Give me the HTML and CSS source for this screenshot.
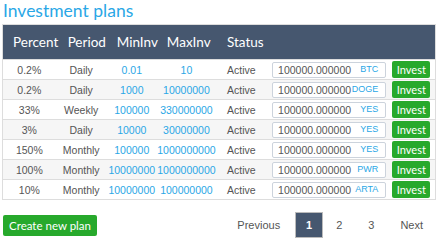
FILE: index.html
```html
<!DOCTYPE html>
<html lang="en">
<head>
    <meta charset="UTF-8">
    <title>Investment plans</title>
    <link rel="stylesheet" href="styles.css">
</head>
<body>
    <div class="page">
        <h2 class="title">Investment plans</h2>

        <table class="plans">
            <colgroup>
                <col class="c-percent">
                <col class="c-period">
                <col class="c-min">
                <col class="c-max">
                <col class="c-status">
                <col class="c-amount">
                <col class="c-action">
            </colgroup>
            <thead>
                <tr>
                    <th>Percent</th>
                    <th>Period</th>
                    <th>MinInv</th>
                    <th>MaxInv</th>
                    <th>Status</th>
                    <th></th>
                    <th></th>
                </tr>
            </thead>
            <tbody>
                <tr>
                    <td><span class="val">0.2%</span></td><td><span class="val">Daily</span></td><td class="num"><span class="val">0.01</span></td><td class="num"><span class="val">10</span></td><td class="status">Active</td>
                    <td class="amount"><div class="amount-box"><span>100000.000000</span><span class="coin">BTC</span></div></td>
                    <td class="action"><button class="invest">Invest</button></td>
                </tr>
                <tr>
                    <td><span class="val">0.2%</span></td><td><span class="val">Daily</span></td><td class="num"><span class="val">1000</span></td><td class="num"><span class="val">10000000</span></td><td class="status">Active</td>
                    <td class="amount"><div class="amount-box"><span>100000.000000</span><span class="coin">DOGE</span></div></td>
                    <td class="action"><button class="invest">Invest</button></td>
                </tr>
                <tr>
                    <td><span class="val">33%</span></td><td><span class="val">Weekly</span></td><td class="num"><span class="val">100000</span></td><td class="num"><span class="val">330000000</span></td><td class="status">Active</td>
                    <td class="amount"><div class="amount-box"><span>100000.000000</span><span class="coin">YES</span></div></td>
                    <td class="action"><button class="invest">Invest</button></td>
                </tr>
                <tr>
                    <td><span class="val">3%</span></td><td><span class="val">Daily</span></td><td class="num"><span class="val">10000</span></td><td class="num"><span class="val">30000000</span></td><td class="status">Active</td>
                    <td class="amount"><div class="amount-box"><span>100000.000000</span><span class="coin">YES</span></div></td>
                    <td class="action"><button class="invest">Invest</button></td>
                </tr>
                <tr>
                    <td><span class="val">150%</span></td><td><span class="val">Monthly</span></td><td class="num"><span class="val">100000</span></td><td class="num"><span class="val">1000000000</span></td><td class="status">Active</td>
                    <td class="amount"><div class="amount-box"><span>100000.000000</span><span class="coin">YES</span></div></td>
                    <td class="action"><button class="invest">Invest</button></td>
                </tr>
                <tr>
                    <td><span class="val">100%</span></td><td><span class="val">Monthly</span></td><td class="num"><span class="val">10000000</span></td><td class="num"><span class="val">1000000000</span></td><td class="status">Active</td>
                    <td class="amount"><div class="amount-box"><span>100000.000000</span><span class="coin">PWR</span></div></td>
                    <td class="action"><button class="invest">Invest</button></td>
                </tr>
                <tr>
                    <td><span class="val">10%</span></td><td><span class="val">Monthly</span></td><td class="num"><span class="val">10000000</span></td><td class="num"><span class="val">100000000</span></td><td class="status">Active</td>
                    <td class="amount"><div class="amount-box"><span>100000.000000</span><span class="coin">ARTA</span></div></td>
                    <td class="action"><button class="invest">Invest</button></td>
                </tr>
            </tbody>
        </table>

        <div class="footer">
            <button class="create">Create new plan</button>
            <div class="pager">
                <span class="page-link">Previous</span>
                <span class="page-link active">1</span>
                <span class="page-link">2</span>
                <span class="page-link">3</span>
                <span class="page-link">Next</span>
            </div>
        </div>
    </div>
</body>
</html>
```

FILE: styles.css
```css
body {
    margin: 0;
    background: #fff;
    font-family: "Liberation Sans", Arial, sans-serif;
    color: #555;
}
.page {
    width: 434px;
    padding: 0 2px;
}
.title {
    margin: 0;
    height: 24px;
    padding-left: 1px;
    font-family: Lato, sans-serif;
    font-weight: normal;
    font-size: 17.5px;
    line-height: 22px;
    color: #2aa7e6;
}
.plans {
    width: 434px;
    table-layout: fixed;
    border-collapse: collapse;
    border: 1px solid #ddd;
    font-size: 10.5px;
}
.c-percent { width: 60px; }
.c-period { width: 50px; }
.c-min { width: 50px; }
.c-max { width: 57px; }
.c-status { width: 48px; }
.c-amount { width: 122px; }
.c-action { width: 45px; }
.plans th {
    height: 34px;
    padding: 0 0 0 4px;
    background: #46576f;
    color: #fff;
    text-align: left;
    font-family: Lato, sans-serif;
    font-weight: normal;
    font-size: 13.5px;
    white-space: nowrap;
}
.plans th:nth-child(1) { padding-left: 10px; }
.plans th:nth-child(2) { padding-left: 5px; }
.plans th:nth-child(5) { padding-left: 7px; }
.plans td {
    height: 19px;
    padding: 0;
    border-top: 1px solid #ddd;
    text-align: center;
    white-space: nowrap;
}
.plans td:nth-child(1) { padding-right: 7px; }
.plans td:nth-child(2) { padding-right: 13px; }
.plans td:nth-child(3) { padding-right: 12px; }
.plans td:nth-child(4) { padding-right: 10px; }
.val {
    display: block;
    margin: 0 -30px;
}
.plans tbody tr:nth-child(even) td {
    background: #f6f6f6;
}
.plans td.num {
    color: #2aa7e6;
}
.plans td.status {
    padding-left: 7px;
    text-align: left;
}
.plans td.amount {
    padding: 0 4px;
}
.amount-box {
    display: flex;
    justify-content: space-between;
    align-items: flex-start;
    height: 14px;
    padding: 0 7px 0 5px;
    border: 1px solid #ccd3dc;
    border-radius: 2px;
    background: #fff;
    font-size: 10.5px;
    line-height: 15px;
    text-align: left;
}
.coin {
    font-size: 9px;
    line-height: 12px;
    color: #2aa7e6;
}
.plans td.action {
    padding: 0 5px 0 2px;
}
.invest {
    display: block;
    width: 38px;
    height: 17px;
    padding: 0;
    border: none;
    border-radius: 2px;
    background: #27a92c;
    color: #fff;
    font-family: Lato, sans-serif;
    font-size: 11px;
    line-height: 17px;
}
.footer {
    display: flex;
    justify-content: space-between;
    align-items: center;
    margin-top: 12px;
}
.create {
    height: 21px;
    width: 94px;
    padding: 0;
    margin-left: 1px;
    border: none;
    border-radius: 2px;
    background: #27a92c;
    color: #fff;
    font-family: Lato, sans-serif;
    font-size: 11.5px;
}
.pager {
    display: flex;
    align-items: center;
    font-size: 11px;
    color: #555;
}
.page-link {
    padding: 0 13px;
    line-height: 26px;
}
.page-link:first-child {
    padding-right: 15px;
}
.page-link.active {
    width: 26px;
    padding: 0;
    border: 1px solid #bbb;
    background: #46576f;
    color: #fff;
    text-align: center;
    font-weight: bold;
    line-height: 24px;
}
```
